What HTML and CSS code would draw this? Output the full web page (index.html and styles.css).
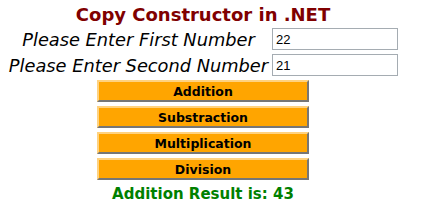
FILE: index.html
```html
<!DOCTYPE html>
<html>
  <head>
    <link rel="stylesheet" href="styles.css">
  </head>
  <body>
    <div class="calc">
      <h1 class="title">Copy Constructor in .NET</h1>
      <div class="row">
        <label class="label" for="first">Please Enter First Number</label>
        <input class="num" id="first" type="text" value="22">
      </div>
      <div class="row">
        <label class="label" for="second">Please Enter Second Number</label>
        <input class="num" id="second" type="text" value="21">
      </div>
      <div class="actions">
        <button class="op">Addition</button>
        <button class="op">Substraction</button>
        <button class="op">Multiplication</button>
        <button class="op">Division</button>
      </div>
      <div class="result">Addition Result is: 43</div>
    </div>
  </body>
</html>
```
FILE: styles.css
```css
body {
  margin: 0;
  padding: 0;
  background: #fff;
  font-family: "DejaVu Sans", Verdana, sans-serif;
}

.calc {
  width: 390px;
  margin-left: 8px;
  padding-top: 4px;
}

.title {
  margin: 0;
  text-align: center;
  color: #800000;
  font-size: 18px;
  line-height: 22px;
}

.row {
  display: flex;
  align-items: center;
  height: 26px;
}

.label {
  width: 262px;
  margin-right: 3px;
  text-align: center;
  font-style: italic;
  font-size: 17.8px;
  white-space: nowrap;
  color: #000;
}

.num {
  box-sizing: border-box;
  width: 126px;
  height: 22px;
  margin: 0;
  padding: 0 3px;
  border: 1px solid #a5acb2;
  font-family: "Liberation Sans", Arial, sans-serif;
  font-size: 13px;
}

.actions {
  display: flex;
  flex-direction: column;
  align-items: center;
  gap: 4px;
  margin-top: 2px;
}

.op {
  box-sizing: border-box;
  width: 212px;
  height: 22px;
  margin: 0;
  padding: 0;
  background: #ffa500;
  border: 2px solid;
  border-color: #ffd27f #767676 #767676 #ffd27f;
  font-family: "DejaVu Sans", Verdana, sans-serif;
  font-weight: bold;
  font-size: 12.5px;
  color: #000;
}

.result {
  margin-top: 5px;
  text-align: center;
  color: #008000;
  font-weight: bold;
  font-size: 15px;
}
```
